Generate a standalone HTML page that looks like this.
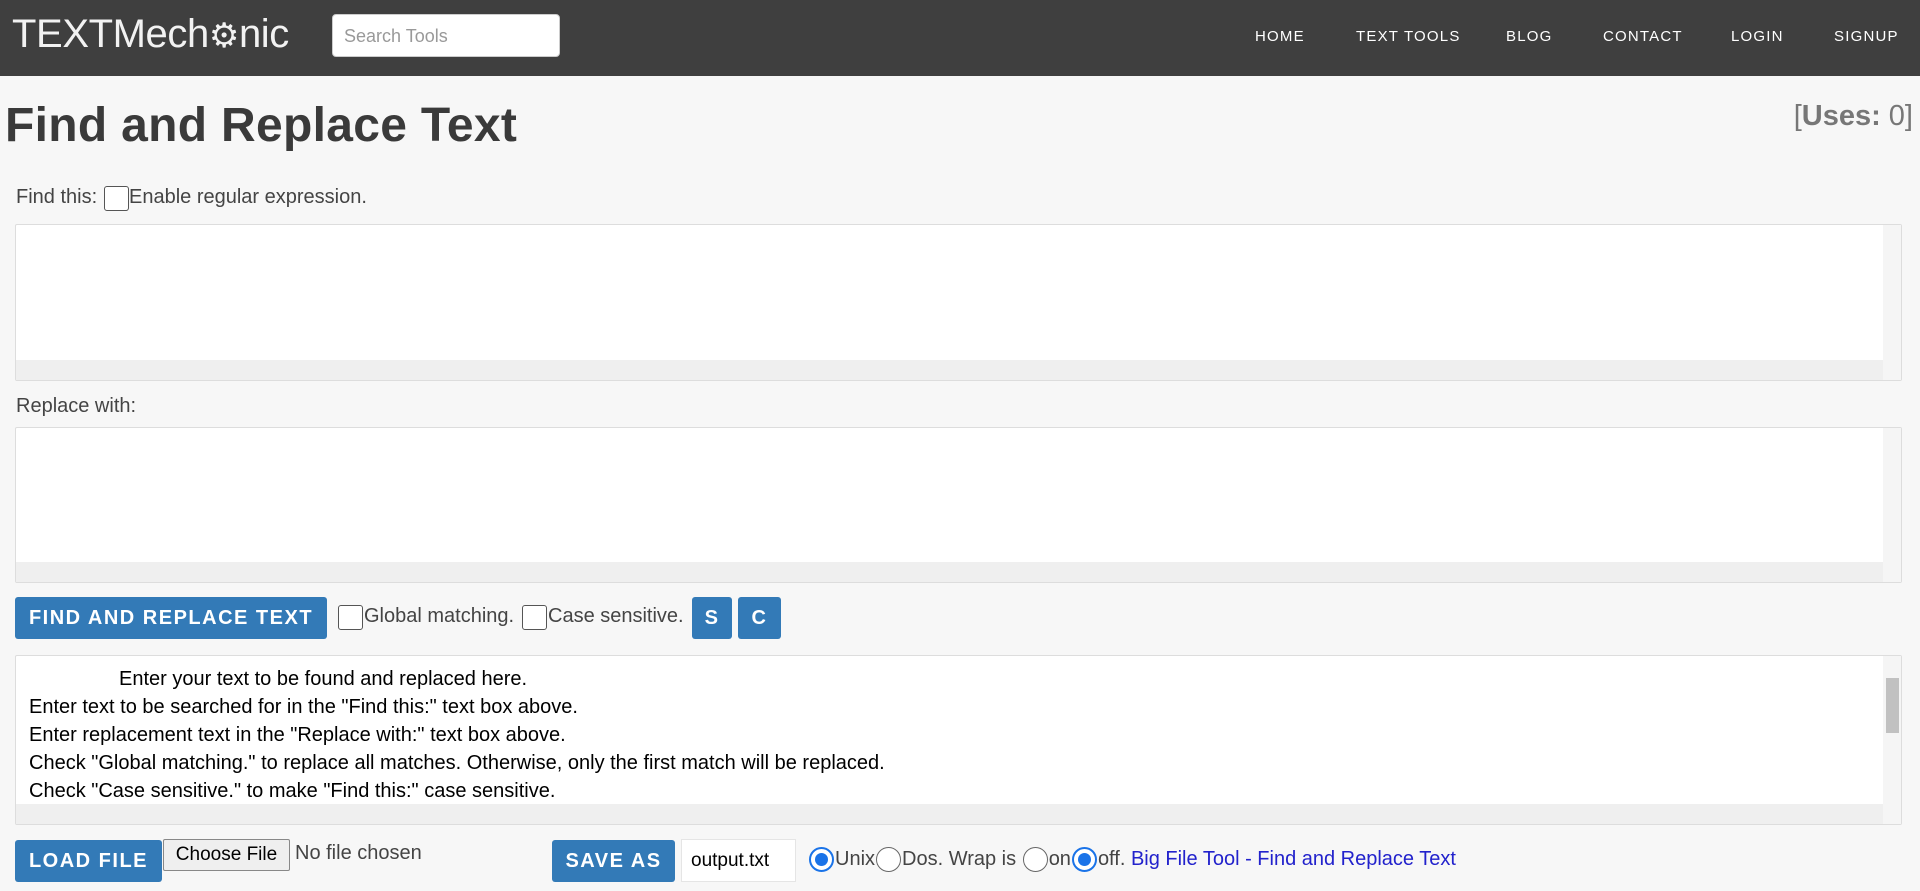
<!DOCTYPE html>
<html><head><meta charset="utf-8"><style>
*{box-sizing:border-box;margin:0;padding:0}
body{width:1920px;height:891px;background:#f7f7f7;font-family:"Liberation Sans",Arial,sans-serif;color:#333;position:relative;overflow:hidden}
.a{position:absolute}
.nav{left:0;top:0;width:1920px;height:76px;background:#3f3f3f}
.logo{left:12px;top:12px;color:#f2f2f2;font-size:40px;letter-spacing:-0.4px;font-weight:300;white-space:nowrap}
.search{left:332px;top:14px;width:228px;height:43px;background:#fff;border-radius:4px;border:1px solid #ccc;color:#999;font-size:18px;padding:11px 11px}
.nl{top:28px;color:#fff;font-size:15px;letter-spacing:1.2px}
h1{position:absolute;left:5px;top:98px;font-size:48px;font-weight:bold;color:#3a3a3a;letter-spacing:0.3px}
.uses{right:7px;top:100px;font-size:29px;color:#777}
.lbl{font-size:20px;color:#444}
.ta{background:#fff;border:1px solid #ddd;border-radius:2px;left:15px;width:1887px}
.hs{position:absolute;left:0;right:18px;bottom:0;height:20px;background:#efefef}
.vs{position:absolute;right:0;top:0;bottom:0;width:18px;background:#f5f5f5}
.cb{width:25px;height:25px;border:1.5px solid #555;border-radius:3px;background:#fff}
.btn{background:#337ab7;color:#fff;font-weight:bold;font-size:20px;letter-spacing:1.5px;border-radius:3px;text-align:center}
.tx{font-size:20px;color:#000;left:29px}
.rd{display:inline-block;vertical-align:middle;position:relative;width:25px;height:25px;border-radius:50%;border:1.5px solid #666;background:#fff;margin:0 1px}
.rd.on{border:2px solid #1a73e8}
.rd.on::after{content:"";position:absolute;left:4px;top:4px;width:13px;height:13px;border-radius:50%;background:#1a73e8}
.row{left:808px;top:847px;font-size:20px;color:#444;white-space:nowrap}
.row span{vertical-align:middle}
</style></head><body>
<div class="a nav"></div>
<div class="a logo">TEXTMech<span style="font-size:34px">⚙</span>nic</div>
<div class="a search">Search Tools</div>
<div class="a nl" style="left:1255px">HOME</div>
<div class="a nl" style="left:1356px">TEXT TOOLS</div>
<div class="a nl" style="left:1506px">BLOG</div>
<div class="a nl" style="left:1603px">CONTACT</div>
<div class="a nl" style="left:1731px">LOGIN</div>
<div class="a nl" style="left:1834px">SIGNUP</div>
<h1>Find and Replace Text</h1>
<div class="a uses">[<b>Uses:</b> 0]</div>
<div class="a lbl" style="left:16px;top:186px">Find this:</div>
<div class="a cb" style="left:104px;top:186px"></div>
<div class="a lbl" style="left:129px;top:186px">Enable regular expression.</div>
<div class="a ta" style="top:224px;height:157px"><div class="hs"></div><div class="vs"></div></div>
<div class="a lbl" style="left:16px;top:395px">Replace with:</div>
<div class="a ta" style="top:427px;height:156px"><div class="hs"></div><div class="vs"></div></div>
<div class="a btn" style="left:15px;top:597px;width:312px;height:42px;line-height:42px">FIND AND REPLACE TEXT</div>
<div class="a cb" style="left:338px;top:605px"></div>
<div class="a lbl" style="left:364px;top:605px">Global matching.</div>
<div class="a cb" style="left:522px;top:605px"></div>
<div class="a lbl" style="left:548px;top:605px">Case sensitive.</div>
<div class="a btn" style="left:692px;top:597px;width:40px;height:42px;line-height:42px">S</div>
<div class="a btn" style="left:738px;top:597px;width:43px;height:42px;line-height:42px">C</div>
<div class="a ta" style="top:655px;height:170px"><div class="hs"></div><div class="vs"><div style="position:absolute;left:3px;top:22px;width:13px;height:55px;background:#c1c1c1"></div></div></div>
<div class="a tx" style="top:668px;left:119px">Enter your text to be found and replaced here.</div>
<div class="a tx" style="top:696px">Enter text to be searched for in the "Find this:" text box above.</div>
<div class="a tx" style="top:724px">Enter replacement text in the "Replace with:" text box above.</div>
<div class="a tx" style="top:752px">Check "Global matching." to replace all matches. Otherwise, only the first match will be replaced.</div>
<div class="a tx" style="top:780px">Check "Case sensitive." to make "Find this:" case sensitive.</div>
<div class="a btn" style="left:15px;top:840px;width:147px;height:42px;line-height:42px">LOAD FILE</div>
<div class="a" style="left:163px;top:839px;width:127px;height:32px;background:#efefef;border:1px solid #888;border-radius:2px;font-size:19px;color:#000;text-align:center;line-height:30px">Choose File</div>
<div class="a lbl" style="left:295px;top:842px">No file chosen</div>
<div class="a btn" style="left:552px;top:840px;width:123px;height:42px;line-height:42px">SAVE AS</div>
<div class="a" style="left:681px;top:839px;width:115px;height:43px;background:#fff;border:1px solid #e5e5e5;font-size:19px;color:#000;padding:10px 9px">output.txt</div>
<div class="a row"><i class="rd on"></i><span>Unix</span><i class="rd"></i><span>Dos. Wrap is </span><i class="rd"></i><span>on</span><i class="rd on"></i><span>off. <span style="color:#2222cc">Big File Tool - Find and Replace Text</span></span></div>
</body></html>
